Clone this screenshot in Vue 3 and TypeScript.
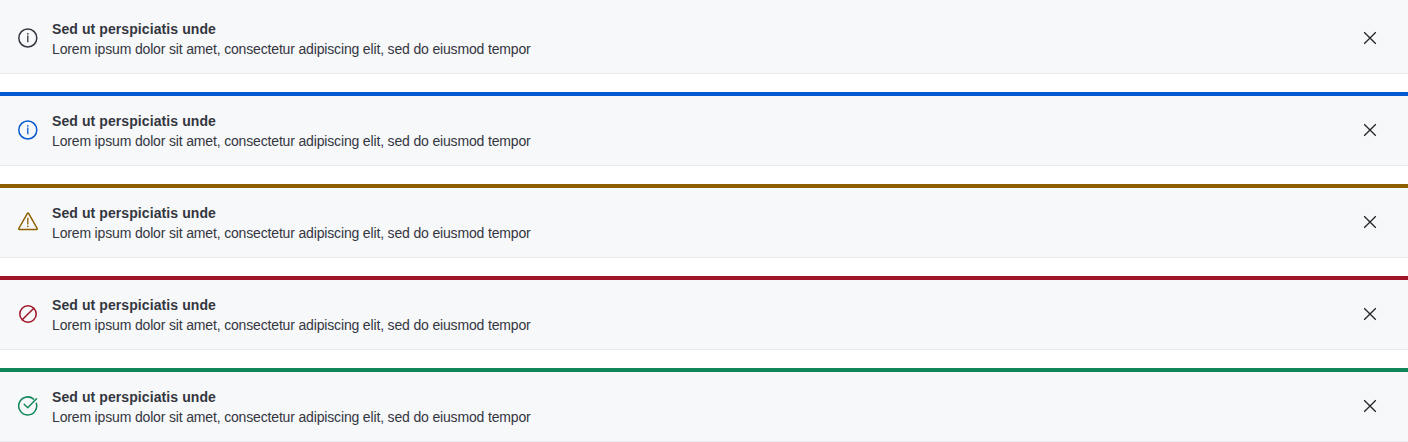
<script setup lang="ts">
type Kind = 'neutral' | 'info' | 'warning' | 'error' | 'success'

const kinds: Kind[] = ['neutral', 'info', 'warning', 'error', 'success']
</script>

<template>
  <main class="stack">
    <section v-for="kind in kinds" :key="kind" class="banner" :class="kind">
      <svg class="icon" viewBox="0 0 20 20" aria-hidden="true">
        <template v-if="kind === 'neutral' || kind === 'info'">
          <circle cx="9.8" cy="10" r="9" />
          <path class="stem" d="M9.8 7.6V14.3" />
          <circle class="dot" cx="9.8" cy="5.8" r=".85" />
        </template>
        <template v-else-if="kind === 'warning'">
          <path d="M9.4 1.4.8 16.5a.7.7 0 0 0 .6 1h17.2a.7.7 0 0 0 .6-1L10.6 1.4a.7.7 0 0 0-1.2 0Z" />
          <path class="stem" d="M9.8 5.8v6.8" />
          <circle class="dot" cx="9.8" cy="14.3" r=".85" />
        </template>
        <template v-else-if="kind === 'error'">
          <circle cx="10" cy="10" r="8.2" />
          <path d="M4.2 15.8 15.8 4.2" />
        </template>
        <template v-else>
          <path d="M18.3 7.2A9 9 0 1 1 15.6 3.1" />
          <path d="m6.2 8.3 3.5 3.4 8.8-8.9" />
        </template>
      </svg>
      <div class="content">
        <strong class="title">Sed ut perspiciatis unde</strong>
        <span class="message">Lorem ipsum dolor sit amet, consectetur adipiscing elit, sed do eiusmod tempor</span>
      </div>
      <button class="close" type="button" aria-label="Close">
        <svg viewBox="0 0 20 20" aria-hidden="true"><path d="m4.2 4.2 11.6 11.6M15.8 4.2 4.2 15.8" /></svg>
      </button>
    </section>
  </main>
</template>

<style>
body { margin: 0; background: #fff; }
</style>
<style scoped>
.stack { display: flex; flex-direction: column; gap: 18px; font: 14px/20px Helvetica, "Liberation Sans", Arial, sans-serif; color: #343640; }
.banner { display: flex; align-items: flex-start; box-sizing: border-box; height: 74px; padding: 15px 28px 0 18px; border-top: 4px solid var(--accent); border-bottom: 1px solid #e8eaee; background: #f7f8fa; }
.neutral { --accent: #f7f8fa; --icon: #343640; }
.info { --accent: #0759d1; }
.warning { --accent: #8d5f00; }
.error { --accent: #a01427; }
.success { --accent: #108758; }
.icon { width: 20px; height: 20px; margin: 9px 14px 0 0; flex: none; fill: none; stroke: var(--icon, var(--accent)); stroke-width: 1.5; stroke-linecap: round; stroke-linejoin: round; }
.stem { stroke-width: 1.3; stroke-linecap: butt; }
.dot { fill: var(--icon, var(--accent)); stroke: none; }
.content { display: flex; flex-direction: column; flex: 1; }
.title { letter-spacing: .09px; }
.message { letter-spacing: -.16px; }
.close { width: 20px; height: 20px; margin-top: 9px; padding: 0; border: 0; background: none; }
.close svg { display: block; width: 20px; height: 20px; fill: none; stroke: #222; stroke-width: 1.3; }
</style>
